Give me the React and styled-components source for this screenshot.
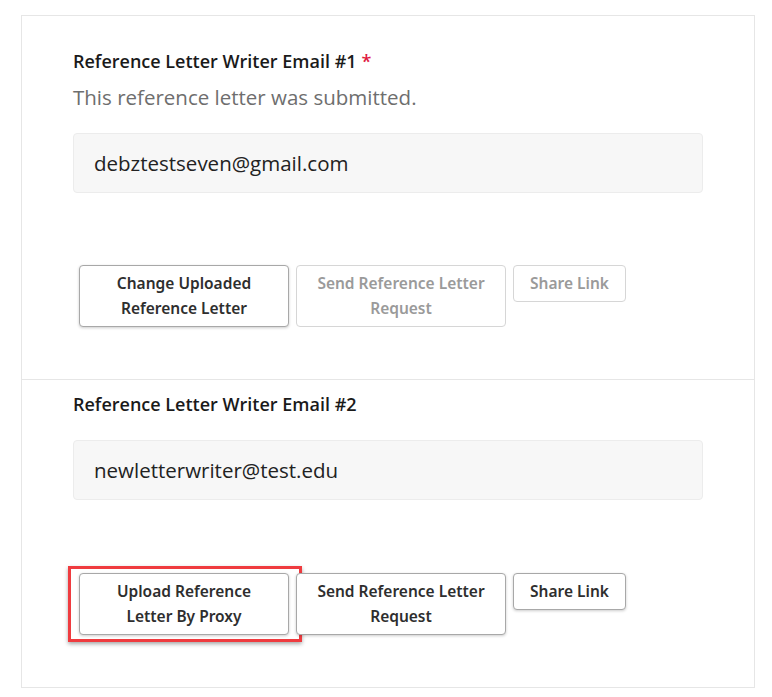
import styled, { createGlobalStyle } from "styled-components";

const GlobalStyle = createGlobalStyle`
  body {
    margin: 0;
    background: #ffffff;
    font-family: "Open Sans", "Noto Sans", sans-serif;
  }
`;

const Panel = styled.div`
  margin: 15px 0 0 21px;
  width: 732px;
  border: 1px solid #e6e6e6;
`;

const Section = styled.div`
  padding: ${({ $top }) => $top}px 51px 52px 51px;
  border-top: ${({ $divided }) => ($divided ? "1px solid #e6e6e6" : "none")};
`;

const Label = styled.div`
  font-size: 18px;
  font-weight: 600;
  line-height: 26px;
  color: #1a1a1a;
  .req {
    color: #e0193f;
    margin-left: 5px;
  }
`;

const Note = styled.div`
  font-size: 20.5px;
  line-height: 28px;
  color: #6e6e6e;
  margin-top: 9px;
`;

const EmailBox = styled.div`
  margin-top: ${({ $gap }) => $gap}px;
  height: 60px;
  box-sizing: border-box;
  background: #f7f7f7;
  border: 1px solid #ececec;
  border-radius: 4px;
  display: flex;
  align-items: center;
  padding: 0 20px;
  font-size: 20.5px;
  color: #222;
`;

const Actions = styled.div`
  margin-top: ${({ $gap }) => $gap}px;
  padding-left: 6px;
  display: flex;
  align-items: flex-start;
  gap: 7px;
`;

const Btn = styled.button`
  position: relative;
  width: 210px;
  padding: 5px 18px;
  font-family: "Noto Sans", "Open Sans", sans-serif;
  font-size: 15.5px;
  font-weight: 600;
  line-height: 25px;
  color: ${({ disabled }) => (disabled ? "#9a9a9a" : "#2e2e2e")};
  background: #fff;
  border: 1px solid ${({ disabled }) => (disabled ? "#d6d6d6" : "#a8a8a8")};
  border-radius: 4px;
  box-shadow: ${({ disabled }) => (disabled ? "none" : "0 1px 3px rgba(0,0,0,0.2)")};
  cursor: ${({ disabled }) => (disabled ? "default" : "pointer")};
`;

const ShareBtn = styled(Btn)`
  width: 113px;
  padding: 5px 10px;
  white-space: nowrap;
`;

const Highlight = styled.span`
  position: absolute;
  top: -8px;
  left: -12px;
  right: -14px;
  bottom: -8px;
  border: 3px solid #ef3b3f;
  box-shadow: 0 2px 4px rgba(0, 0, 0, 0.35);
  pointer-events: none;
`;

export default function App() {
  return (
    <>
      <GlobalStyle />
      <Panel>
        <Section $top={32}>
          <Label>
            Reference Letter Writer Email #1<span className="req">*</span>
          </Label>
          <Note>This reference letter was submitted.</Note>
          <EmailBox $gap={22}>debztestseven@gmail.com</EmailBox>
          <Actions $gap={72}>
            <Btn>Change Uploaded Reference Letter</Btn>
            <Btn disabled>Send Reference Letter Request</Btn>
            <ShareBtn disabled>Share Link</ShareBtn>
          </Actions>
        </Section>
        <Section $top={11} $divided>
          <Label>Reference Letter Writer Email #2</Label>
          <EmailBox $gap={23}>newletterwriter@test.edu</EmailBox>
          <Actions $gap={73}>
            <Btn>
              Upload Reference Letter By Proxy
              <Highlight />
            </Btn>
            <Btn>Send Reference Letter Request</Btn>
            <ShareBtn>Share Link</ShareBtn>
          </Actions>
        </Section>
      </Panel>
    </>
  );
}
